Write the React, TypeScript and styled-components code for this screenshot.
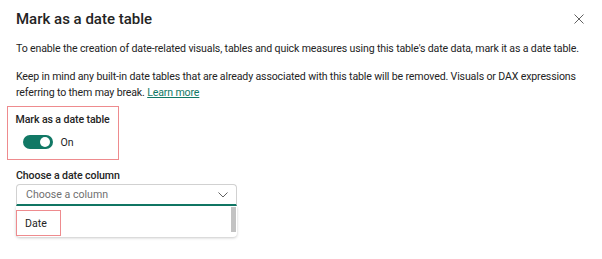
import React from 'react'
import styled, { createGlobalStyle } from 'styled-components'

const Global = createGlobalStyle`
  html, body {
    margin: 0;
    background: #fff;
    font-family: Roboto, 'Noto Sans', sans-serif;
    color: #242424;
  }
`

const Dialog = styled.div`
  width: 602px;
  height: 259px;
  box-sizing: border-box;
  padding: 8px 16px 0 16px;
  overflow: hidden;
`

const Header = styled.div`
  display: flex;
  align-items: center;
  justify-content: space-between;
  height: 22px;
`

const Title = styled.h1`
  margin: 0;
  font-size: 15px;
  font-weight: 500;
  white-space: nowrap;
`

const Close = styled.button`
  border: 0;
  background: none;
  padding: 0;
  width: 14px;
  height: 14px;
  display: flex;
  align-items: center;
  justify-content: center;
`

const Para = styled.p<{ $gap: number }>`
  margin: ${(p) => p.$gap}px 0 0 0;
  font-size: 10.6px;
  letter-spacing: -0.15px;
  line-height: 16px;
  white-space: nowrap;
`

const Link = styled.a`
  color: #117865;
  text-decoration: underline;
`

const Highlight = styled.div`
  display: inline-flex;
  flex-direction: column;
  border: 1.5px solid #ee8b8e;
  box-sizing: border-box;
  margin: 5px 0 0 -9px;
  padding: 4.5px 0 8.5px 7.5px;
  width: 112px;
`

const Label = styled.div`
  font-size: 10.6px;
  letter-spacing: -0.1px;
  font-weight: 500;
  line-height: 16px;
  white-space: nowrap;
`

const SwitchRow = styled.div`
  display: flex;
  align-items: center;
  gap: 8px;
  margin-top: 6.5px;
  padding-left: 7px;
  height: 16px;
  font-size: 10.6px;
`

const Track = styled.span`
  width: 30px;
  height: 14px;
  border-radius: 8px;
  background: #117865;
  position: relative;
  display: inline-block;
`

const Thumb = styled.span`
  position: absolute;
  right: 3px;
  top: 2px;
  width: 10px;
  height: 10px;
  border-radius: 50%;
  background: #fff;
`

const Field = styled.div`
  margin-top: 8.5px;
  width: 221px;
`

const Dropdown = styled.div`
  height: 22px;
  box-sizing: border-box;
  border: 1px solid #d1d1d1;
  border-bottom: 2px solid #117865;
  border-radius: 4px 4px 0 0;
  display: flex;
  align-items: center;
  justify-content: space-between;
  padding: 0 8px 0 9px;
  font-size: 10.6px;
  color: #707070;
`

const Listbox = styled.div`
  height: 31px;
  box-shadow: 0 1px 3px rgba(0, 0, 0, 0.22);
  border-radius: 0 0 4px 4px;
  display: flex;
  justify-content: space-between;
  align-items: flex-start;
  padding-top: 1px;
  box-sizing: border-box;
`

const Option = styled.div`
  margin-top: 3px;
  width: 45px;
  height: 26px;
  box-sizing: border-box;
  border: 1.5px solid #ee8b8e;
  display: flex;
  align-items: center;
  padding-left: 8px;
  font-size: 10.6px;
`

const Scrollbar = styled.div`
  width: 5px;
  height: 25px;
  margin-right: 1px;
  background: #c2c2c2;
`

export default function App() {
  return (
    <>
      <Global />
      <Dialog>
        <Header>
          <Title>Mark as a date table</Title>
          <Close aria-label="Close">
            <svg width="10" height="10" viewBox="0 0 10 10">
              <path d="M0.5 0.5 L9.5 9.5 M9.5 0.5 L0.5 9.5" stroke="#616161" strokeWidth="1" />
            </svg>
          </Close>
        </Header>
        <Para $gap={11}>
          To enable the creation of date-related visuals, tables and quick measures using this table's date data, mark it as a date table.
        </Para>
        <Para $gap={12}>
          Keep in mind any built-in date tables that are already associated with this table will be removed. Visuals or DAX expressions
          <br />
          referring to them may break. <Link href="#">Learn more</Link>
        </Para>
        <Highlight>
          <Label>Mark as a date table</Label>
          <SwitchRow>
            <Track>
              <Thumb />
            </Track>
            On
          </SwitchRow>
        </Highlight>
        <Field>
          <Label>Choose a date column</Label>
          <Dropdown>
            Choose a column
            <svg width="10" height="6" viewBox="0 0 10 6">
              <path d="M0.5 0.5 L5 5 L9.5 0.5" stroke="#616161" strokeWidth="1" fill="none" />
            </svg>
          </Dropdown>
          <Listbox>
            <Option>Date</Option>
            <Scrollbar />
          </Listbox>
        </Field>
      </Dialog>
    </>
  )
}
